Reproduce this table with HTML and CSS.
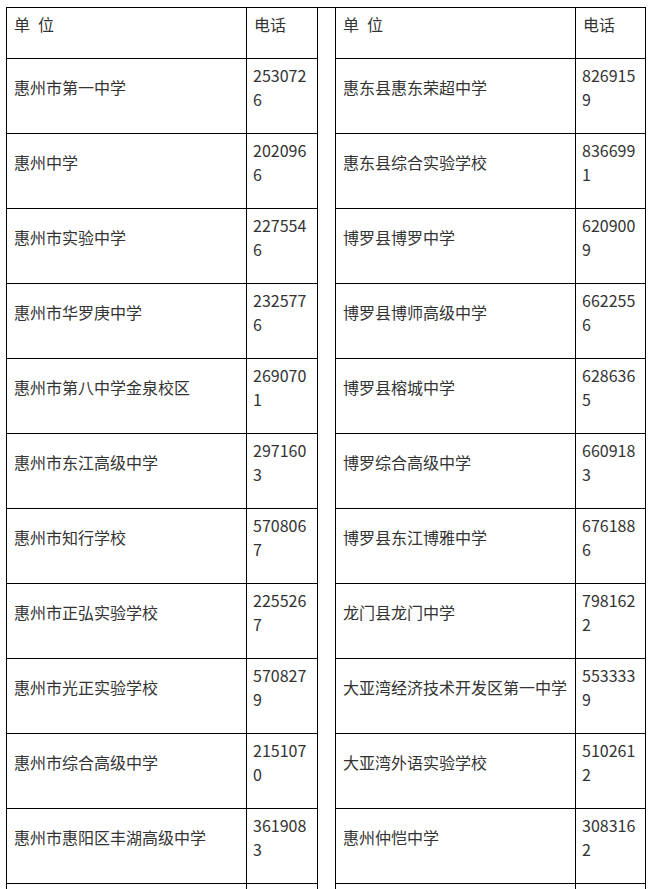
FILE: index.html
```html
<!DOCTYPE html>
<html lang="zh-CN">
<head>
<meta charset="utf-8">
<title>单位电话</title>
<link rel="stylesheet" href="styles.css">
</head>
<body>
<table class="contacts">
  <colgroup>
    <col class="c-name">
    <col class="c-tel">
    <col class="c-gap">
    <col class="c-name">
    <col class="c-tel2">
  </colgroup>
  <tbody>
    <tr class="head">
      <td>单&ensp;位</td><td>电话</td>
      <td class="gap" rowspan="13"></td>
      <td>单&ensp;位</td><td>电话</td>
    </tr>
    <tr><td>惠州市第一中学</td><td class="tel">2530726</td><td>惠东县惠东荣超中学</td><td class="tel">8269159</td></tr>
    <tr><td>惠州中学</td><td class="tel">2020966</td><td>惠东县综合实验学校</td><td class="tel">8366991</td></tr>
    <tr><td>惠州市实验中学</td><td class="tel">2275546</td><td>博罗县博罗中学</td><td class="tel">6209009</td></tr>
    <tr><td>惠州市华罗庚中学</td><td class="tel">2325776</td><td>博罗县博师高级中学</td><td class="tel">6622556</td></tr>
    <tr><td>惠州市第八中学金泉校区</td><td class="tel">2690701</td><td>博罗县榕城中学</td><td class="tel">6286365</td></tr>
    <tr><td>惠州市东江高级中学</td><td class="tel">2971603</td><td>博罗综合高级中学</td><td class="tel">6609183</td></tr>
    <tr><td>惠州市知行学校</td><td class="tel">5708067</td><td>博罗县东江博雅中学</td><td class="tel">6761886</td></tr>
    <tr><td>惠州市正弘实验学校</td><td class="tel">2255267</td><td>龙门县龙门中学</td><td class="tel">7981622</td></tr>
    <tr><td>惠州市光正实验学校</td><td class="tel">5708279</td><td>大亚湾经济技术开发区第一中学</td><td class="tel">5533339</td></tr>
    <tr><td>惠州市综合高级中学</td><td class="tel">2151070</td><td>大亚湾外语实验学校</td><td class="tel">5102612</td></tr>
    <tr><td>惠州市惠阳区丰湖高级中学</td><td class="tel">3619083</td><td>惠州仲恺中学</td><td class="tel">3083162</td></tr>
    <tr><td>&nbsp;</td><td class="tel">&nbsp;<br>&nbsp;</td><td>&nbsp;</td><td class="tel">&nbsp;</td></tr>
  </tbody>
</table>
</body>
</html>
```

FILE: styles.css
```css
html, body {
  margin: 0;
  padding: 0;
  background: #ffffff;
}

body {
  padding: 7px 0 0 6px;
  font-family: "Noto Sans CJK SC", "Noto Sans", sans-serif;
  font-size: 16px;
  color: #333333;
}

.contacts {
  border-collapse: collapse;
  table-layout: fixed;
  width: 639px;
}

.c-name { width: 240px; }
.c-tel { width: 71px; }
.c-gap { width: 18px; }
.c-tel2 { width: 70px; }

.contacts td {
  border: 1px solid #000000;
  padding: 4px 6px 22px 7px;
  line-height: 24px;
  vertical-align: middle;
  word-break: break-all;
}

.contacts td.tel {
  padding-left: 6px;
}

.contacts td.gap {
  padding: 0;
}
```
